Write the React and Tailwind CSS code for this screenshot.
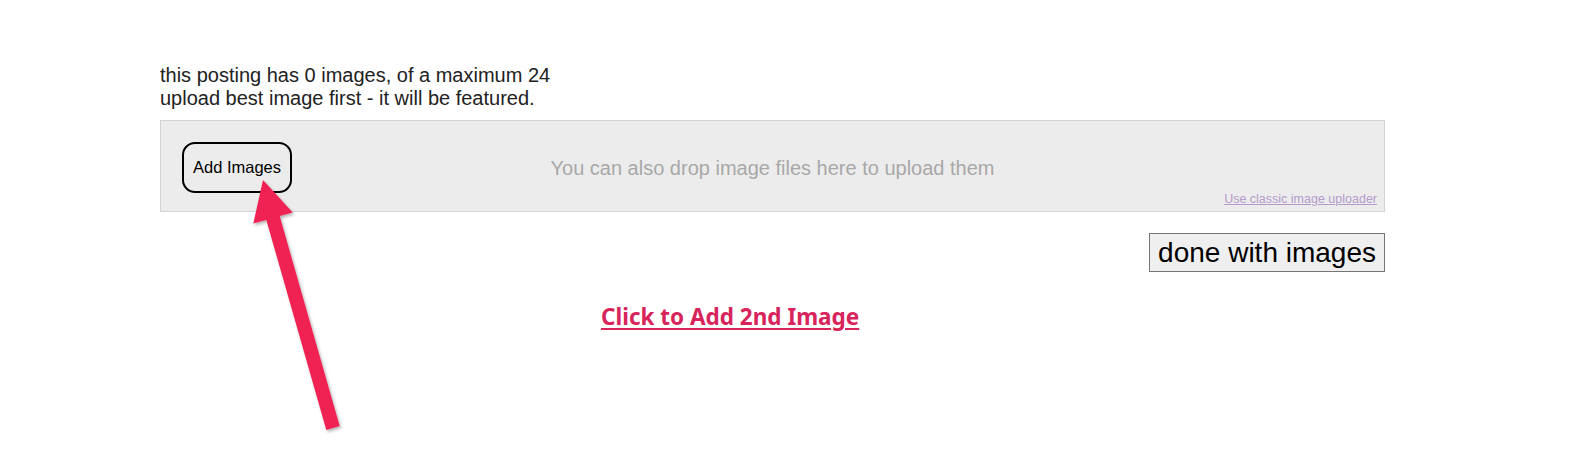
import React from 'react'

const Arrow = () => (
  <svg
    className="absolute left-0 top-0 pointer-events-none"
    width="1584"
    height="461"
    viewBox="0 0 1584 461"
  >
    <defs>
      <filter id="arrowShadow" x="-20%" y="-20%" width="140%" height="140%">
        <feDropShadow dx="1.5" dy="2" stdDeviation="1.8" floodColor="#000" floodOpacity="0.3" />
      </filter>
    </defs>
    <polygon
      points="263,180 292.7,212.4 279.7,216.1 339.7,426.1 326.3,429.9 266.3,219.9 253.3,223.6"
      fill="#ef2152"
      filter="url(#arrowShadow)"
    />
  </svg>
)

const App = () => {
  return (
    <div className="relative h-[461px] w-[1584px] overflow-hidden bg-white font-['Liberation_Sans',Arial,sans-serif]">
      <div className="ml-[160px] w-[1225px] pt-[64px]">
        {/* Intro text */}
        <p className="text-[20px] leading-[23px] text-[#222]">
          this posting has 0 images, of a maximum 24
          <br />
          upload best image first - it will be featured.
        </p>

        {/* Drop zone */}
        <div className="mt-[10px] grid h-[92px] border border-[#d3d3d3] bg-[#ececec]">
          <div className="col-start-1 row-start-1 flex items-center justify-center pt-[3px]">
            <span className="text-[20px] text-[#a8a8a8]">You can also drop image files here to upload them</span>
          </div>
          <div className="col-start-1 row-start-1 self-start pl-[21px] pt-[21px]">
            <button className="h-[51px] rounded-[13px] border-2 border-black bg-[#ececec] px-[9px] text-[16.5px] text-black">
              Add Images
            </button>
          </div>
          <div className="col-start-1 row-start-1 flex items-end justify-end pb-[5px] pr-[7px]">
            <a href="#" className="text-[12.5px] leading-[14px] text-[#b59bcb] underline">
              Use classic image uploader
            </a>
          </div>
        </div>

        {/* Done button */}
        <div className="mt-[21px] flex justify-end">
          <button className="h-[39px] border border-[#767676] bg-[#efefef] px-[8px] text-[28px] leading-[32px] text-black">
            done with images
          </button>
        </div>

        {/* Add 2nd image link */}
        <div className="mt-[32px] pl-[441px]">
          <a
            href="#"
            className="font-['Noto_Sans',sans-serif] text-[22.5px] font-bold leading-[26px] text-[#d7245b] underline decoration-2 underline-offset-[3px]"
          >
            Click to Add 2nd Image
          </a>
        </div>
      </div>

      <Arrow />
    </div>
  )
}

export default App
